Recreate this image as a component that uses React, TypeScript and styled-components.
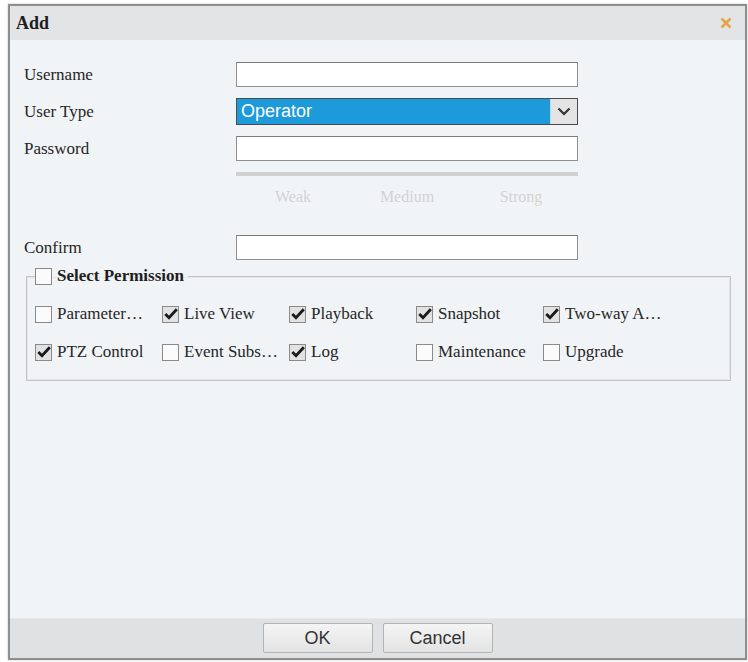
import React from "react";
import styled, { createGlobalStyle } from "styled-components";

const GlobalStyle = createGlobalStyle`
  html, body { margin: 0; padding: 0; background: #ffffff; }
  body { font-family: "Liberation Serif", "Times New Roman", serif; color: #262626; }
  * { box-sizing: border-box; }
`;

const Page = styled.div`
  width: 748px;
  height: 662px;
  padding: 4px 1px 2px 8px;
`;

const Dialog = styled.div`
  width: 739px;
  height: 656px;
  border: 2px solid #8e8e8e;
  background: #f1f4f7;
  display: flex;
  flex-direction: column;
  box-shadow: 0 0 2px rgba(0, 0, 0, 0.25);
`;

const TitleBar = styled.div`
  height: 34px;
  background: #e2e4e6;
  display: flex;
  align-items: center;
  justify-content: space-between;
  padding: 0 13px 0 6px;
`;

const Title = styled.div`
  font-weight: bold;
  font-size: 18px;
  color: #1e1e1e;
`;

const CloseButton = styled.button`
  border: 0;
  background: transparent;
  padding: 0;
  width: 12px;
  height: 12px;
  display: flex;
  cursor: pointer;
`;

const Body = styled.div`
  flex: 1;
  padding: 22px 14px 0 14px;
  display: flex;
  flex-direction: column;
`;

const FormRow = styled.div<{ $mt?: number }>`
  display: grid;
  grid-template-columns: 212px 342px;
  align-items: center;
  margin-top: ${(p) => p.$mt ?? 0}px;
`;

const Label = styled.label`
  font-size: 17px;
  color: #262626;
`;

const TextInput = styled.input`
  height: 25px;
  width: 342px;
  border: 1px solid #8f8f8f;
  border-top-color: #7a7a7a;
  background: #fff;
  outline: none;
  padding: 0 4px;
  font-size: 16px;
`;

const Select = styled.div`
  height: 27px;
  width: 342px;
  border: 1px solid #4c4c4c;
  display: flex;
  background: #1d9ad9;
`;

const SelectValue = styled.div`
  flex: 1;
  color: #fff;
  font-family: "Liberation Sans", Arial, sans-serif;
  font-size: 18px;
  line-height: 25px;
  padding-left: 4px;
`;

const SelectArrow = styled.div`
  width: 27px;
  background: #e4e4e4;
  border-left: 1px solid #b8dcf0;
  display: flex;
  align-items: center;
  justify-content: center;
`;

const Strength = styled.div`
  margin-left: 212px;
  width: 342px;
  margin-top: 11px;
`;

const StrengthBar = styled.div`
  height: 4px;
  background: #d0d0d0;
`;

const StrengthLabels = styled.div`
  display: grid;
  grid-template-columns: repeat(3, 1fr);
  margin-top: 11px;
  line-height: 20px;
  font-size: 16px;
  color: #d2d2d2;
  text-align: center;
`;

const PermissionSet = styled.fieldset`
  margin: 7px 0 0 2px;
  width: 705px;
  border: 1px solid #c4c4c4;
  box-shadow: inset 0 0 0 1px #e4e6e8;
  padding: 20px 8px 19px 8px;
`;

const Legend = styled.legend`
  padding: 0 4px 0 0;
  display: flex;
  align-items: center;
  gap: 5px;
  height: 18px;
  font-weight: bold;
  font-size: 17px;
  color: #1e1e1e;
`;

const PermissionGrid = styled.div`
  display: grid;
  grid-template-columns: repeat(5, 127px);
  row-gap: 20px;
`;

const CheckItem = styled.label`
  display: flex;
  align-items: center;
  gap: 5px;
  height: 18px;
  font-size: 17px;
  color: #262626;
  white-space: nowrap;
`;

const Box = styled.span<{ $checked: boolean }>`
  width: 17px;
  height: 17px;
  flex: none;
  border: 1px solid #8a8a8a;
  background: ${(p) => (p.$checked ? "#e2e2e2" : "#fbfbfb")};
  display: flex;
  align-items: center;
  justify-content: center;
`;

const Footer = styled.div`
  height: 40px;
  background: #dfe1e3;
  border-top: 1px solid #e8eaec;
  display: flex;
  justify-content: center;
  align-items: flex-start;
  gap: 10px;
  padding-top: 4px;
`;

const Button = styled.button`
  width: 110px;
  height: 30px;
  border: 1px solid #b3b3b3;
  border-radius: 2px;
  background: linear-gradient(#f4f4f4, #e3e3e3);
  font-family: "Liberation Sans", Arial, sans-serif;
  font-size: 18px;
  color: #333;
  padding: 0;
  cursor: pointer;
`;

const Check = () => (
  <svg width="14" height="12" viewBox="0 0 14 12">
    <path d="M1.3 6 L5 9.8 L12.8 1.3" fill="none" stroke="#1a1a1a" strokeWidth="2.8" />
  </svg>
);

const CheckBox: React.FC<{ checked?: boolean }> = ({ checked = false }) => (
  <Box $checked={checked}>{checked && <Check />}</Box>
);

const permissions: { label: string; checked: boolean }[] = [
  { label: "Parameter…", checked: false },
  { label: "Live View", checked: true },
  { label: "Playback", checked: true },
  { label: "Snapshot", checked: true },
  { label: "Two-way A…", checked: true },
  { label: "PTZ Control", checked: true },
  { label: "Event Subs…", checked: false },
  { label: "Log", checked: true },
  { label: "Maintenance", checked: false },
  { label: "Upgrade", checked: false },
];

export default function App() {
  return (
    <>
      <GlobalStyle />
      <Page>
        <Dialog>
          <TitleBar>
            <Title>Add</Title>
            <CloseButton aria-label="Close">
              <svg width="12" height="12" viewBox="0 0 12 12">
                <path d="M1.5 1.5 L10.5 10.5 M10.5 1.5 L1.5 10.5" stroke="#e5a547" strokeWidth="2.6" />
              </svg>
            </CloseButton>
          </TitleBar>
          <Body>
            <FormRow>
              <Label>Username</Label>
              <TextInput />
            </FormRow>
            <FormRow $mt={11}>
              <Label>User Type</Label>
              <Select>
                <SelectValue>Operator</SelectValue>
                <SelectArrow>
                  <svg width="14" height="9" viewBox="0 0 14 9">
                    <path d="M1.5 1.5 L7 7 L12.5 1.5" fill="none" stroke="#333" strokeWidth="2.2" />
                  </svg>
                </SelectArrow>
              </Select>
            </FormRow>
            <FormRow $mt={11}>
              <Label>Password</Label>
              <TextInput type="password" />
            </FormRow>
            <Strength>
              <StrengthBar />
              <StrengthLabels>
                <span>Weak</span>
                <span>Medium</span>
                <span>Strong</span>
              </StrengthLabels>
            </Strength>
            <FormRow $mt={28}>
              <Label>Confirm</Label>
              <TextInput type="password" />
            </FormRow>
            <PermissionSet>
              <Legend>
                <CheckBox />
                Select Permission
              </Legend>
              <PermissionGrid>
                {permissions.map((p) => (
                  <CheckItem key={p.label}>
                    <CheckBox checked={p.checked} />
                    {p.label}
                  </CheckItem>
                ))}
              </PermissionGrid>
            </PermissionSet>
          </Body>
          <Footer>
            <Button>OK</Button>
            <Button>Cancel</Button>
          </Footer>
        </Dialog>
      </Page>
    </>
  );
}
